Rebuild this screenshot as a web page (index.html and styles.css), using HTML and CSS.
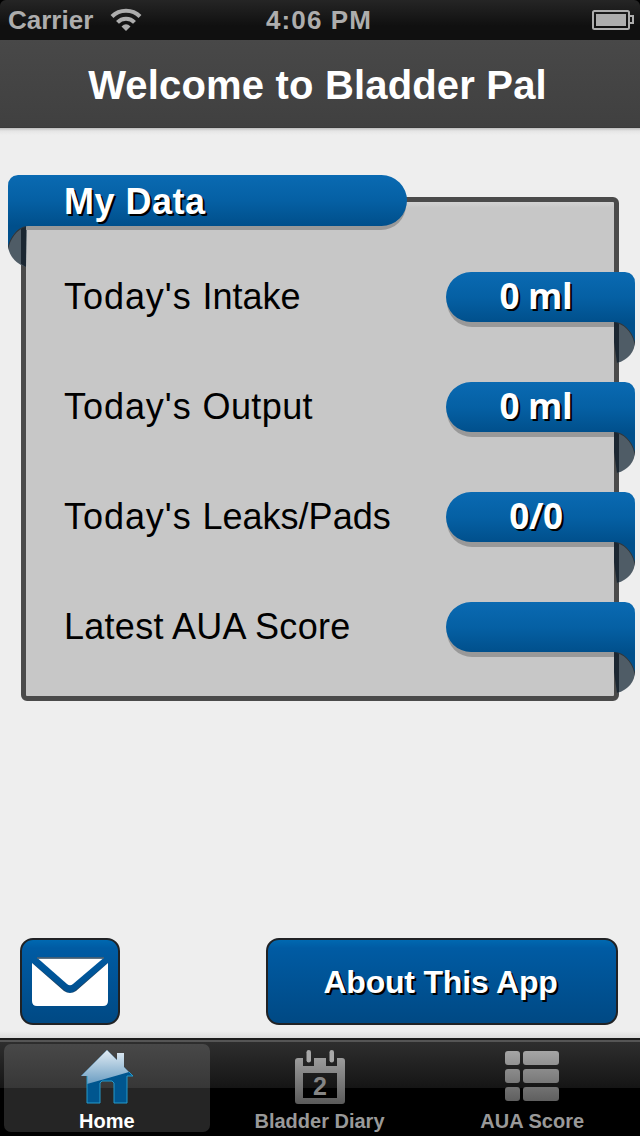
FILE: index.html
```html
<!DOCTYPE html>
<html lang="en">
<head>
<meta charset="utf-8">
<title>Bladder Pal</title>
<link rel="stylesheet" href="styles.css">
</head>
<body>
<svg class="defs" width="0" height="0" aria-hidden="true">
  <defs>
    <linearGradient id="blue" x1="0" y1="0" x2="0" y2="51" gradientUnits="userSpaceOnUse">
      <stop offset="0" stop-color="#0a6ab2"/><stop offset=".5" stop-color="#0560a4"/><stop offset="1" stop-color="#004f8b"/>
    </linearGradient>
    <linearGradient id="grey" x1="0" y1="0" x2="0" y2="54" gradientUnits="userSpaceOnUse">
      <stop offset="0" stop-color="#a8a8a8"/><stop offset="1" stop-color="#5c5c5c"/>
    </linearGradient>
    <linearGradient id="gloss" x1="0" y1="0" x2="0" y2="1">
      <stop offset="0" stop-color="#e2ecf4"/><stop offset="1" stop-color="#6a9dc2"/>
    </linearGradient>
    <symbol id="ribbon" viewBox="0 0 189 92">
      <path d="M168 49H173C182 51 189 59 189 69C189 80 182 88 171 91Z" fill="#4f5c66"/>
      <path d="M168 49H173V90L171 91L168 70Z" fill="#1b2732"/>
      <path d="M26 5H168V55H26A25 25 0 0 1 26 5Z" fill="#999"/>
      <path d="M171 51C181 54 187 63 189 74V64L175 49Z" fill="#30363b"/>
      <path d="M25 0H179Q189 1 189 11V70C187 61 179 50 168 50H25A25 25 0 0 1 25 0Z" fill="url(#blue)"/>
    </symbol>
  </defs>
</svg>
<div class="screen">
  <div class="status">
    <div class="carrier"><span>Carrier</span>
      <svg width="32" height="24" viewBox="0 0 32 24" fill="none" stroke="#adadad" stroke-width="4">
        <path d="M2 8.500C9.500.800 22.500.800 30 8.500"/><path d="M7.500 14.300C12 9.500 20 9.500 24.500 14.300"/><path d="M11.500 18.500Q16 14 20.500 18.500L16 23Z" fill="#adadad" stroke="none"/>
      </svg>
    </div>
    <div class="clock">4:06 PM</div>
    <svg class="battery" width="42" height="20" viewBox="0 0 42 20"><rect x="1" y="1" width="36" height="18" rx="1.500" fill="none" stroke="#adadad" stroke-width="2"/><rect x="4" y="4" width="30" height="12" fill="#adadad"/><path d="M38 6H41V13H38" fill="none" stroke="#adadad" stroke-width="2"/></svg>
  </div>
  <header class="nav"><h1>Welcome to Bladder Pal</h1></header>
  <main class="content">
    <section class="card">
      <div class="heading">
        <svg width="400" height="92" viewBox="0 0 400 92">
          <path d="M19 49C8 51 0 59 0 71C1 81 8 89 18 92Z" fill="#4f5c66"/>
          <path d="M13 49H18V92L13 89Z" fill="#1b2732"/>
          <path d="M18 5H373A25 25 0 0 1 373 55H18Z" fill="#999"/>
          <path d="M18 52C9 54 2 64 0 75V66L14 49Z" fill="#30363b"/>
          <path d="M10 0H373.500A25.500 25.500 0 0 1 373.500 51H20C10 51 2 62 0 72V11Q0 1 10 0Z" fill="url(#blue)"/>
        </svg>
        <h2>My Data</h2>
      </div>
      <div class="row"><span class="label"><span class="day">Today's </span>Intake</span><div class="value"><svg width="189" height="92"><use href="#ribbon"/></svg><b>0 ml</b></div></div>
      <div class="row"><span class="label output"><span class="day">Today's </span>Output</span><div class="value"><svg width="189" height="92"><use href="#ribbon"/></svg><b>0 ml</b></div></div>
      <div class="row"><span class="label"><span class="day">Today's </span>Leaks/Pads</span><div class="value"><svg width="189" height="92"><use href="#ribbon"/></svg><b>0/0</b></div></div>
      <div class="row"><span class="label score">Latest AUA Score</span><div class="value"><svg width="189" height="92"><use href="#ribbon"/></svg></div></div>
    </section>
    <div class="actions">
      <button class="button mail" aria-label="Mail">
        <svg width="76" height="49" viewBox="0 0 76 49">
          <path d="M0 7L33 35Q38 39 43 35L76 7" fill="none" stroke="#303b45" stroke-opacity=".65" stroke-width="2"/>
          <path d="M0 6L32 34Q38 38 44 34L76 6V44Q76 49 71 49H5Q0 49 0 44Z" fill="#fff"/>
          <path d="M6 1.500H71L41 27Q38 29.500 35 27Z" fill="#fff"/><path d="M5 1H72" stroke="#55606a" stroke-width="1.500"/>
        </svg>
      </button>
      <button class="button about">About This App</button>
    </div>
  </main>
  <nav class="tabs">
    <div class="tab active">
      <svg width="54" height="58" viewBox="0 0 54 58">
        <path d="M27 1L37 11V4H44V18L53 27H47V54H34V34L32 32H22L20 34V54H7V27H1Z" fill="#00568f"/>
        <path d="M27 1L37 11V4H44V18L49 23Q32 28 7 35V27H1Z" fill="url(#gloss)"/>
        <path d="M49 23L53 27H47V54H34V34L32 32H22L20 34V54H7V27" fill="none" stroke="#259acb" stroke-width="1"/>
      </svg><span>Home</span>
    </div>
    <div class="tab">
      <svg width="54" height="58" viewBox="0 0 54 58">
        <path fill="url(#grey)" fill-rule="evenodd" d="M5 9H10V17H21V9H33V17H44V9H49Q52 9 52 12V52Q52 55 49 55H5Q2 55 2 52V12Q2 9 5 9ZM10 24V49H44V24Z"/>
        <rect x="13.500" y="1" width="4.500" height="12.500" rx="2.200" fill="#a8a8a8"/><rect x="36.500" y="1" width="4.500" height="12.500" rx="2.200" fill="#a8a8a8"/>
        <text x="27" y="45.500" class="date" text-anchor="middle">2</text>
      </svg><span>Bladder Diary</span>
    </div>
    <div class="tab">
      <svg width="54" height="58" viewBox="0 0 54 58" fill="url(#grey)"><path d="M3 2H12Q15 2 15 5V13Q15 16 12 16H3Q0 16 0 13V5Q0 2 3 2ZM21 2H51Q54 2 54 5V13Q54 16 51 16H21Q18 16 18 13V5Q18 2 21 2ZM3 20H12Q15 20 15 23V31Q15 34 12 34H3Q0 34 0 31V23Q0 20 3 20ZM21 20H51Q54 20 54 23V31Q54 34 51 34H21Q18 34 18 31V23Q18 20 21 20ZM3 38H12Q15 38 15 41V49Q15 52 12 52H3Q0 52 0 49V41Q0 38 3 38ZM21 38H51Q54 38 54 41V49Q54 52 51 52H21Q18 52 18 49V41Q18 38 21 38Z"/></svg><span>AUA Score</span>
    </div>
  </nav>
</div>
</body>
</html>
```
FILE: styles.css
```css
* { box-sizing: border-box; }
body { margin: 0; background: #000; font-family: "Liberation Sans", Arial, sans-serif; }
h1, h2 { margin: 0; }
.defs { display: block; }
svg { display: block; flex: none; }
.screen { width: 640px; height: 1136px; display: flex; flex-direction: column; overflow: hidden; }
.status { height: 40px; flex: none; display: grid; grid-template-columns: 1fr auto 1fr; align-items: center; padding: 0 6px 0 8px; border-radius: 6px 6px 0 0; background: linear-gradient(#252525, #101010 65%); color: #adadad; font-size: 26px; font-weight: bold; line-height: 38px; }
.carrier { display: flex; align-items: center; gap: 17px; }
.clock { letter-spacing: 1.1px; padding-right: 4px; }
.battery { justify-self: end; }
.nav { height: 88px; flex: none; background: linear-gradient(#484848, #404040); border-bottom: 1px solid #3a3a3a; text-align: center; }
.nav h1 { color: #fff; font-size: 40px; line-height: 91px; padding-right: 5px; letter-spacing: .17px; }
.content { flex: 1; display: flex; flex-direction: column; background: linear-gradient(#bdbdbd, #e5e5e5 3px, #eee 7px, #eee 903px, #ddd); }
.card { position: relative; margin: 69px 21px 0; height: 504px; padding: 70px 0 0 38px; border: 5px solid #4a4a4a; border-radius: 6px; background: linear-gradient(#d2d2d2, #c7c7c7 6px); }
.heading { position: absolute; left: -18px; top: -27px; }
.heading h2 { position: absolute; left: 56px; top: 6px; font-size: 36px; line-height: 42px; letter-spacing: .5px; color: #fff; text-shadow: 2px 2px 0 #000; white-space: nowrap; }
.row { display: flex; justify-content: space-between; height: 110px; margin-right: -21px; }
.label { font-size: 36px; line-height: 50px; color: #000; white-space: nowrap; }
.day { letter-spacing: .95px; }
.output { letter-spacing: .4px; }
.score { letter-spacing: .27px; }
.value { position: relative; width: 189px; height: 92px; }
.value b { position: absolute; inset: 0 9px auto 0; text-align: center; color: #fff; font: bold 35px/48px "Open Sans", sans-serif; letter-spacing: -.3px; text-shadow: 2px 2px 0 #000; }
.actions { margin-top: auto; padding: 0 22px 13px 20px; display: flex; justify-content: space-between; }
.button { height: 87px; display: flex; align-items: center; justify-content: center; padding: 0; border: 2px solid #202225; border-radius: 13px; background: linear-gradient(#0068b0, #005ba3 10%, #004984); color: #fff; font: bold 32px "Liberation Sans", sans-serif; text-shadow: 2px 2px 0 #000; }
.mail { width: 100px; }
.about { width: 352px; padding: 2px 3px 0 0; letter-spacing: -.2px; }
.tabs { height: 98px; flex: none; display: flex; gap: 7px; padding: 4px 5px 4px 4px; border-top: 2px solid #1c1c1c; background: linear-gradient(#555 0 2px, #2e2e2e 2px, #151515 48px, #000 48px); }
.tab { flex: 1; display: flex; flex-direction: column; align-items: center; border-radius: 7px; padding-top: 5px; color: #999; font-size: 20px; font-weight: bold; line-height: 22px; white-space: nowrap; }
.tab span { margin-top: 3px; }
.active { background: linear-gradient(#484848, #373737 44px, #252525 44px); color: #fff; }
.date { font: bold 25px "Liberation Sans", sans-serif; fill: #858585; }
```
